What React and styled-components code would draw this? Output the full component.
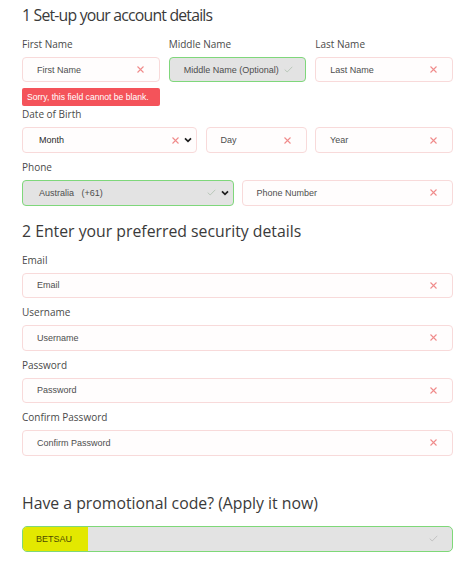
import React from "react";
import styled, { createGlobalStyle, css } from "styled-components";

const Global = createGlobalStyle`
  html, body { margin: 0; padding: 0; background: #ffffff; }
  body { font-family: "Open Sans", "Noto Sans", sans-serif; }
  * { box-sizing: border-box; }
`;

const Page = styled.div`
  width: 474px;
  padding: 3px 21px 10px 22px;
  display: flex;
  flex-direction: column;
`;

const Heading = styled.h2`
  margin: ${(p) => p.$mt || 0}px 0 ${(p) => p.$mb || 10}px 0;
  font-family: "Open Sans", "Noto Sans", sans-serif;
  font-weight: 400;
  font-size: 15.8px;
  letter-spacing: ${(p) => p.$ls || 0}px;
  line-height: 24px;
  color: #3a3a3a;
  white-space: nowrap;
`;

const Grid = styled.div`
  display: grid;
  grid-template-columns: ${(p) => p.$cols};
  column-gap: ${(p) => p.$gap || 9}px;
  margin-top: ${(p) => p.$mt || 0}px;
`;

const Field = styled.div`
  display: flex;
  flex-direction: column;
  gap: 6px;
  min-width: 0;
  margin-top: ${(p) => p.$mt || 0}px;
`;

const Label = styled.label`
  font-family: "Open Sans", "Noto Sans", sans-serif;
  font-size: 10px;
  line-height: 14px;
  height: 14px;
  color: #4a4a4a;
  white-space: nowrap;
`;

const Spacer = styled.div`
  height: 14px;
`;

const Box = styled.div`
  height: ${(p) => p.$h || 26}px;
  border-radius: 4px;
  display: flex;
  align-items: center;
  padding: 0 14px 0 ${(p) => p.$pl || 14}px;
  font-family: "Liberation Sans", Arial, sans-serif;
  font-size: 9px;
  color: #4e4e4e;
  overflow: hidden;
  ${(p) =>
    p.$ok
      ? css`
          border: 1px solid #7fd77b;
          background: #e3e3e3;
        `
      : css`
          border: 1px solid #f8dada;
          background: #fffdfd;
        `}
`;

const BoxText = styled.span`
  flex: 1;
  white-space: pre;
  ${(p) => p.$strong && css`color: #2a2a2a;`}
`;

const Icons = styled.span`
  display: flex;
  align-items: center;
  gap: 5px;
  margin-right: ${(p) => p.$mr}px;
`;

const ErrorBox = styled.div`
  margin-top: 6px;
  height: 18px;
  background: #f4535a;
  border-radius: 2px;
  color: #ffffff;
  font-family: "Liberation Sans", Arial, sans-serif;
  font-size: 8.6px;
  display: flex;
  align-items: center;
  padding: 0 5px;
  white-space: nowrap;
`;

const PromoBox = styled.div`
  height: 26px;
  border-radius: 5px;
  border: 1px solid #7ed878;
  background: #e3e3e3;
  display: flex;
  align-items: stretch;
  overflow: hidden;
`;

const PromoCode = styled.div`
  width: 65px;
  background: #e3e800;
  display: flex;
  align-items: center;
  padding-left: 13px;
  font-family: "Liberation Sans", Arial, sans-serif;
  font-size: 9px;
  color: #4d4b00;
`;

const PromoRest = styled.div`
  flex: 1;
  display: flex;
  align-items: center;
  justify-content: flex-end;
  padding-right: 14px;
`;

const XIcon = () => (
  <svg width="7" height="7" viewBox="0 0 7 7">
    <path d="M0.5 0.5 L6.5 6.5 M6.5 0.5 L0.5 6.5" stroke="#f08b8b" strokeWidth="1.1" fill="none" />
  </svg>
);

const CheckIcon = ({ color = "#b9c7b9" }) => (
  <svg width="9" height="7" viewBox="0 0 9 7">
    <path d="M0.7 3.6 L3.2 6 L8.3 0.8" stroke={color} strokeWidth="1" fill="none" />
  </svg>
);

const Chevron = () => (
  <svg width="8" height="6" viewBox="0 0 8 6">
    <path d="M1 1.3 L4 4.3 L7 1.3" stroke="#1e1e1e" strokeWidth="1.7" fill="none" />
  </svg>
);

const Input = ({ text, ok, strong, select, pl, h }) => (
  <Box $ok={ok} $pl={pl} $h={h}>
    <BoxText $strong={strong}>{text}</BoxText>
    <Icons $mr={select ? -10 : ok ? -2 : 1}>
      {ok ? <CheckIcon /> : <XIcon />}
      {select && <Chevron />}
    </Icons>
  </Box>
);

export default function App() {
  return (
    <>
      <Global />
      <Page>
        <Heading $ls={-0.8}>1 Set-up your account details</Heading>
        <Grid $cols="repeat(3, minmax(0, 1fr))" $gap={9}>
          <Field>
            <Label>First Name</Label>
            <Input text="First Name" h={25} />
          </Field>
          <Field>
            <Label>Middle Name</Label>
            <Input text="Middle Name (Optional)" ok h={25} />
          </Field>
          <Field>
            <Label>Last Name</Label>
            <Input text="Last Name" h={25} />
          </Field>
        </Grid>
        <Grid $cols="repeat(3, minmax(0, 1fr))" $gap={9}>
          <ErrorBox>Sorry, this field cannot be blank.</ErrorBox>
        </Grid>
        <Grid $cols="175px 101px minmax(0, 1fr)" $gap={8.5} $mt={1}>
          <Field>
            <Label>Date of Birth</Label>
            <Input text="Month" strong select pl={16} />
          </Field>
          <Field>
            <Spacer />
            <Input text="Day" />
          </Field>
          <Field>
            <Spacer />
            <Input text="Year" />
          </Field>
        </Grid>
        <Grid $cols="repeat(2, minmax(0, 1fr))" $gap={8} $mt={6.5}>
          <Field>
            <Label>Phone</Label>
            <Input text="Australia   (+61)" ok select pl={16} />
          </Field>
          <Field>
            <Spacer />
            <Input text="Phone Number" />
          </Field>
        </Grid>
        <Heading $mt={13}>2 Enter your preferred security details</Heading>
        <Field>
          <Label>Email</Label>
          <Input text="Email" h={25} />
        </Field>
        <Field $mt={7}>
          <Label>Username</Label>
          <Input text="Username" />
        </Field>
        <Field $mt={7}>
          <Label>Password</Label>
          <Input text="Password" h={25} />
        </Field>
        <Field $mt={7}>
          <Label>Confirm Password</Label>
          <Input text="Confirm Password" />
        </Field>
        <Heading $mt={35} $mb={11}>Have a promotional code? (Apply it now)</Heading>
        <PromoBox>
          <PromoCode>BETSAU</PromoCode>
          <PromoRest>
            <CheckIcon color="#c2c2c2" />
          </PromoRest>
        </PromoBox>
      </Page>
    </>
  );
}
